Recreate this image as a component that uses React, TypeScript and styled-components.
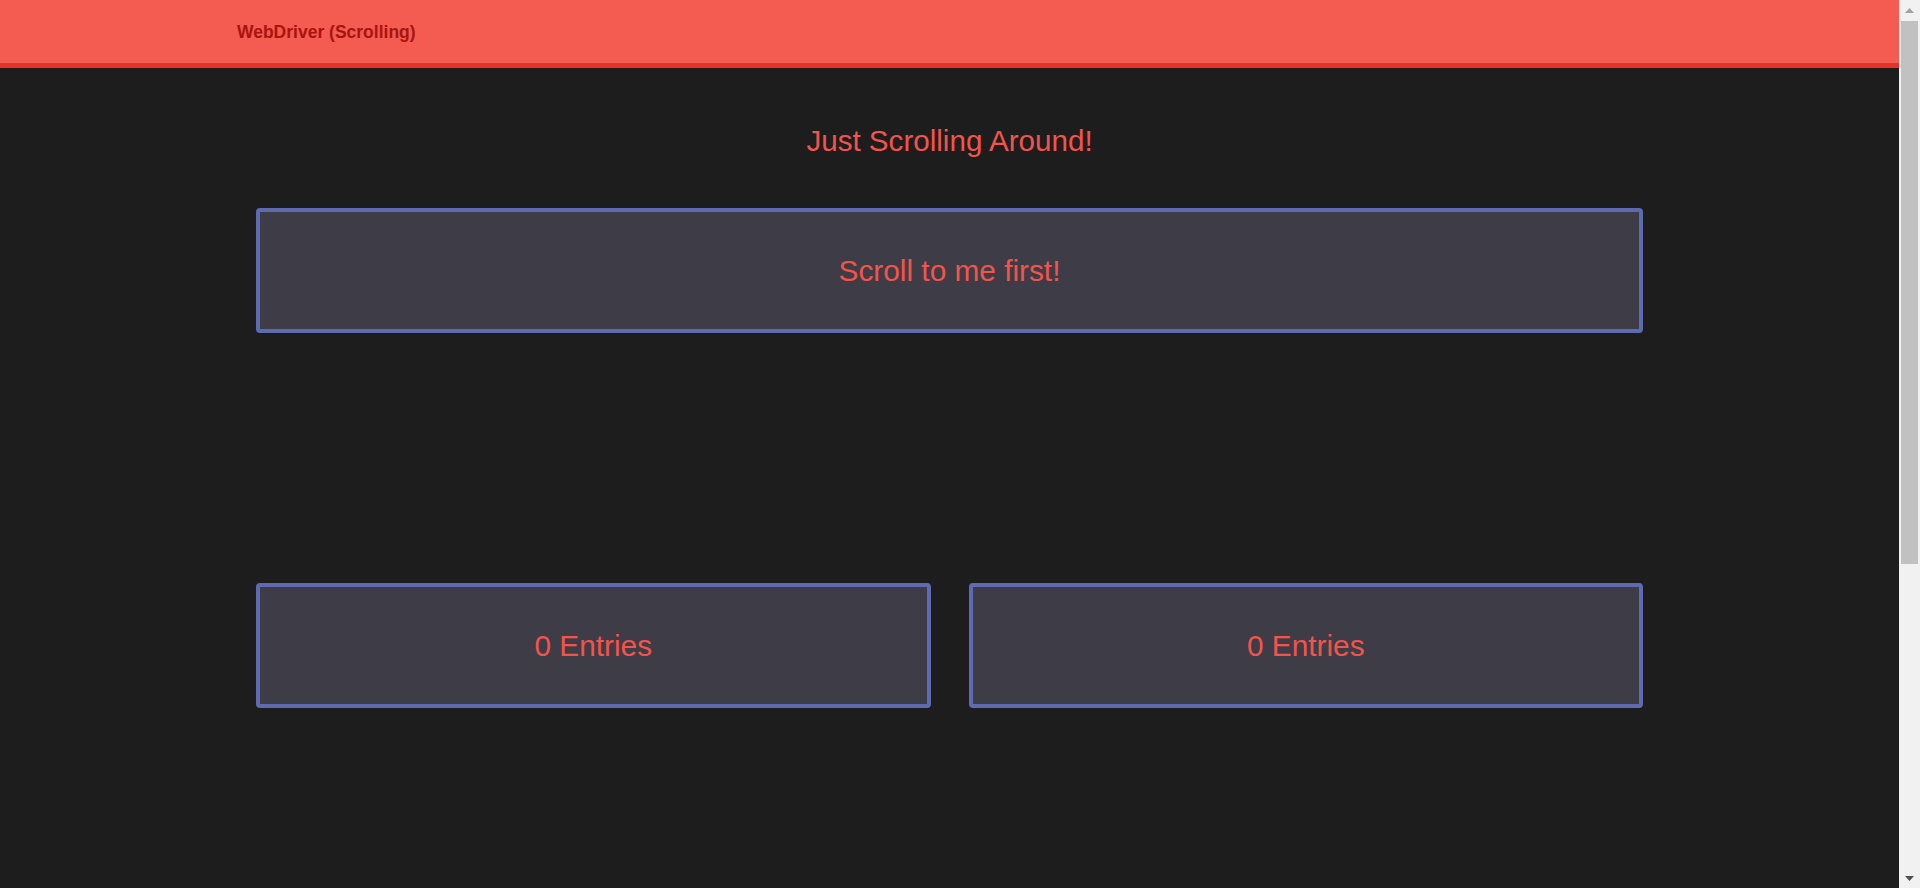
import React from "react";
import styled, { createGlobalStyle } from "styled-components";

const GlobalStyle = createGlobalStyle`
  html, body {
    margin: 0;
    padding: 0;
    background: #1d1d1d;
    overflow: hidden;
  }
  body {
    font-family: "Liberation Sans", Arial, sans-serif;
  }
`;

const Shell = styled.div`
  display: flex;
  height: 100vh;
  width: 100vw;
`;

const Viewport = styled.div`
  flex: 1;
  min-width: 0;
  overflow-y: auto;
  scrollbar-width: none;
  &::-webkit-scrollbar {
    display: none;
  }
`;

const Page = styled.div`
  min-height: 1385px;
  background: #1d1d1d;
`;

const Header = styled.header`
  height: 63px;
  background: #f45b51;
  border-bottom: 5px solid #e5322a;
`;

const HeaderInner = styled.div`
  width: 1425px;
  margin: 0 auto;
  height: 100%;
  display: flex;
  align-items: center;
`;

const Brand = styled.span`
  font-size: 17.5px;
  font-weight: 700;
  color: #a8140e;
  padding-top: 1px;
`;

const Main = styled.main`
  width: 1387px;
  margin: 0 auto;
  padding-top: 56px;
  display: flex;
  flex-direction: column;
`;

const Title = styled.h1`
  margin: 0 0 50px;
  font-size: 29.6px;
  font-weight: 400;
  line-height: normal;
  color: #f2544b;
  text-align: center;
`;

const Row = styled.div<{ $top?: number }>`
  display: grid;
  grid-template-columns: 1fr 1fr;
  column-gap: 38px;
  margin-top: ${(p) => p.$top ?? 0}px;
`;

const Box = styled.div<{ $wide?: boolean }>`
  grid-column: ${(p) => (p.$wide ? "1 / -1" : "auto")};
  height: 125px;
  box-sizing: border-box;
  border: 4px solid #5f6bb0;
  border-radius: 4px;
  background: #3d3c47;
  display: flex;
  align-items: center;
  justify-content: center;
  font-size: 29.8px;
  color: #f2544b;
`;

const Rail = styled.div`
  width: 21px;
  flex: 0 0 21px;
  background: #f1f1f1;
  display: flex;
  flex-direction: column;
`;

const RailButton = styled.div`
  height: 20px;
  flex: 0 0 20px;
  display: flex;
  align-items: center;
  justify-content: center;
`;

const Thumb = styled.div`
  height: 543px;
  margin: 1px 2px 0;
  background: #c1c1c1;
`;

const RailSpace = styled.div`
  flex: 1;
`;

const Arrow = ({ up, color }: { up?: boolean; color: string }) => (
  <svg width="9" height="5" viewBox="0 0 9 5">
    <polygon points={up ? "0,5 9,5 4.5,0" : "0,0 9,0 4.5,5"} fill={color} />
  </svg>
);

export default function App() {
  return (
    <Shell>
      <GlobalStyle />
      <Viewport>
        <Page>
          <Header>
            <HeaderInner>
              <Brand>WebDriver (Scrolling)</Brand>
            </HeaderInner>
          </Header>
          <Main>
            <Title>Just Scrolling Around!</Title>
            <Row>
              <Box $wide>Scroll to me first!</Box>
            </Row>
            <Row $top={250}>
              <Box>0 Entries</Box>
              <Box>0 Entries</Box>
            </Row>
          </Main>
        </Page>
      </Viewport>
      <Rail>
        <RailButton>
          <Arrow up color="#a3a3a3" />
        </RailButton>
        <Thumb />
        <RailSpace />
        <RailButton>
          <Arrow color="#505050" />
        </RailButton>
      </Rail>
    </Shell>
  );
}
